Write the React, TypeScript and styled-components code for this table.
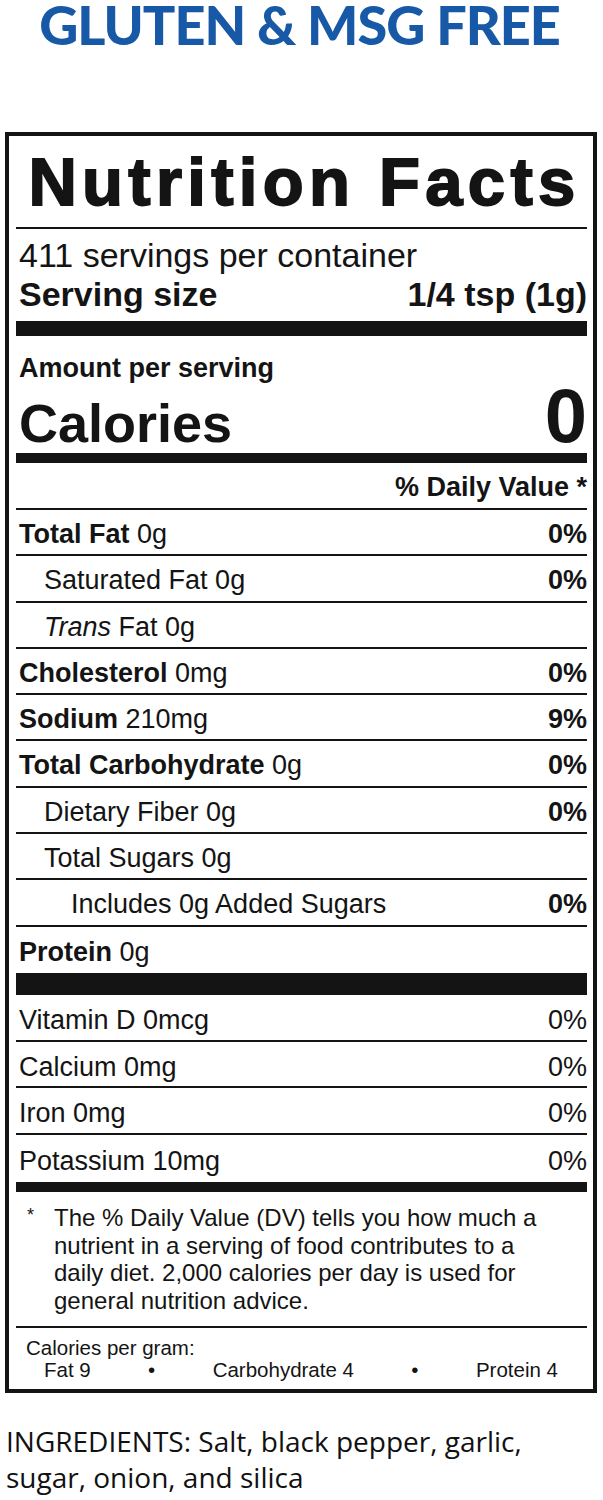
import styled, { createGlobalStyle } from "styled-components";

const GlobalStyle = createGlobalStyle`
  html, body {
    margin: 0;
    padding: 0;
    background: #fff;
  }
  body {
    font-family: "Liberation Sans", Arial, sans-serif;
    color: #141414;
  }
`;

const Page = styled.div`
  width: 603px;
`;

const Banner = styled.h1`
  box-sizing: border-box;
  margin: 0;
  height: 132px;
  padding: 1px 4px 0 0;
  font-family: Lato, "Open Sans", sans-serif;
  font-weight: 900;
  font-size: 54px;
  line-height: 47px;
  color: #1759a6;
  text-align: center;
  letter-spacing: -1px;
`;

const Label = styled.section`
  box-sizing: border-box;
  width: 592px;
  margin-left: 5px;
  border: 4px solid #141414;
  padding: 0 6px 0 7px;
  display: flex;
  flex-direction: column;
`;

const Title = styled.h2`
  box-sizing: border-box;
  margin: 0;
  height: 93px;
  padding: 6px 0 0 6px;
  border-bottom: 2px solid #141414;
  font-size: 67px;
  line-height: 80px;
  font-weight: 700;
  letter-spacing: 5.3px;
  text-align: center;
  -webkit-text-stroke: 1.8px #141414;
  white-space: nowrap;
`;

const ServingBlock = styled.div`
  padding: 7px 0 7px 3px;
  font-size: 34px;
  line-height: 39px;
`;

const ServingSize = styled.div`
  display: flex;
  justify-content: space-between;
  font-weight: 700;
`;

const Bar = styled.div<{ $h: number }>`
  height: ${({ $h }) => $h}px;
  background: #141414;
`;

const Amount = styled.div`
  padding: 16px 0 0 3px;
  font-size: 27px;
  line-height: 32px;
  font-weight: 700;
`;

const CaloriesRow = styled.div`
  height: 69px;
  display: flex;
  justify-content: space-between;
  align-items: baseline;
  padding-left: 3px;
  line-height: 64.6px;
  font-weight: 700;
`;

const CaloriesWord = styled.span`
  font-size: 54px;
`;

const CaloriesValue = styled.span`
  font-size: 76px;
`;

const DvHeader = styled.div`
  box-sizing: border-box;
  height: 47px;
  padding-top: 3px;
  border-bottom: 2px solid #141414;
  text-align: right;
  font-size: 27px;
  line-height: 42px;
  font-weight: 700;
`;

const Row = styled.div<{ $indent?: number; $last?: boolean; $h: number; $drop: number }>`
  box-sizing: border-box;
  height: ${({ $h }) => $h}px;
  display: flex;
  justify-content: space-between;
  padding: ${({ $drop }) => $drop}px 0 0 ${({ $indent }) => 3 + ($indent ?? 0)}px;
  border-bottom: ${({ $last }) => ($last ? "none" : "2px solid #141414")};
  font-size: 27px;
  line-height: ${({ $h, $last }) => $h - ($last ? 1 : 3)}px;
  white-space: nowrap;
  overflow: hidden;
`;

const Strong = styled.b`
  font-weight: 700;
`;

const Percent = styled.span<{ $bold?: boolean }>`
  font-weight: ${({ $bold }) => ($bold ? 700 : 400)};
`;

const Footnote = styled.div`
  display: grid;
  grid-template-columns: 27px 1fr;
  padding: 12px 0 11px 11px;
  border-bottom: 2px solid #141414;
  font-size: 24px;
  line-height: 27.7px;
`;

const Star = styled.span`
  font-size: 18px;
  line-height: 22px;
`;

const PerGram = styled.div`
  padding: 9px 0 8px 10px;
  font-size: 20.5px;
  line-height: 22px;
`;

const GramRow = styled.div`
  display: flex;
  justify-content: space-between;
  padding: 0 29px 0 18px;
`;

const Ingredients = styled.p`
  margin: 30px 0 0 6px;
  font-family: "Open Sans", "Noto Sans", sans-serif;
  font-size: 28px;
  line-height: 36px;
  color: #111;
`;

type Nutrient = {
  name: string;
  amount: string;
  bold?: boolean;
  italic?: string;
  indent?: number;
  dv?: string;
};

const nutrients: Nutrient[] = [
  { name: "Total Fat", amount: "0g", bold: true, dv: "0%" },
  { name: "Saturated Fat", amount: "0g", indent: 25, dv: "0%" },
  { name: "Fat", italic: "Trans", amount: "0g", indent: 25 },
  { name: "Cholesterol", amount: "0mg", bold: true, dv: "0%" },
  { name: "Sodium", amount: "210mg", bold: true, dv: "9%" },
  { name: "Total Carbohydrate", amount: "0g", bold: true, dv: "0%" },
  { name: "Dietary Fiber", amount: "0g", indent: 25, dv: "0%" },
  { name: "Total Sugars", amount: "0g", indent: 25 },
  { name: "Includes 0g Added Sugars", amount: "", indent: 52, dv: "0%" },
  { name: "Protein", amount: "0g", bold: true },
];

const vitamins = [
  { name: "Vitamin D 0mcg", dv: "0%" },
  { name: "Calcium 0mg", dv: "0%" },
  { name: "Iron 0mg", dv: "0%" },
  { name: "Potassium 10mg", dv: "0%" },
];

export default function App() {
  return (
    <Page>
      <GlobalStyle />
      <Banner>GLUTEN &amp; MSG FREE</Banner>
      <Label>
        <Title>Nutrition Facts</Title>
        <ServingBlock>
          <div>411 servings per container</div>
          <ServingSize>
            <span>Serving size</span>
            <span>1/4 tsp (1g)</span>
          </ServingSize>
        </ServingBlock>
        <Bar $h={15} />
        <Amount>Amount per serving</Amount>
        <CaloriesRow>
          <CaloriesWord>Calories</CaloriesWord>
          <CaloriesValue>0</CaloriesValue>
        </CaloriesRow>
        <Bar $h={10} />
        <DvHeader>% Daily Value *</DvHeader>
        {nutrients.map((n, i) => (
          <Row
            key={n.name + i}
            $h={46.3}
            $drop={3}
            $indent={n.indent}
            $last={i === nutrients.length - 1}
          >
            <span>
              {n.italic && <i>{n.italic} </i>}
              {n.bold ? <Strong>{n.name}</Strong> : n.name}
              {n.amount && ` ${n.amount}`}
            </span>
            {n.dv && <Percent $bold>{n.dv}</Percent>}
          </Row>
        ))}
        <Bar $h={22} />
        {vitamins.map((v, i) => (
          <Row key={v.name} $h={46.75} $drop={4} $last={i === vitamins.length - 1}>
            <span>{v.name}</span>
            <Percent>{v.dv}</Percent>
          </Row>
        ))}
        <Bar $h={10} />
        <Footnote>
          <Star>*</Star>
          <span>
            The % Daily Value (DV) tells you how much a<br />
            nutrient in a serving of food contributes to a<br />
            daily diet. 2,000 calories per day is used for<br />
            general nutrition advice.
          </span>
        </Footnote>
        <PerGram>
          <div>Calories per gram:</div>
          <GramRow>
            <span>Fat 9</span>
            <span>•</span>
            <span>Carbohydrate 4</span>
            <span>•</span>
            <span>Protein 4</span>
          </GramRow>
        </PerGram>
      </Label>
      <Ingredients>
        INGREDIENTS: Salt, black pepper, garlic,
        <br />
        sugar, onion, and silica
      </Ingredients>
    </Page>
  );
}
